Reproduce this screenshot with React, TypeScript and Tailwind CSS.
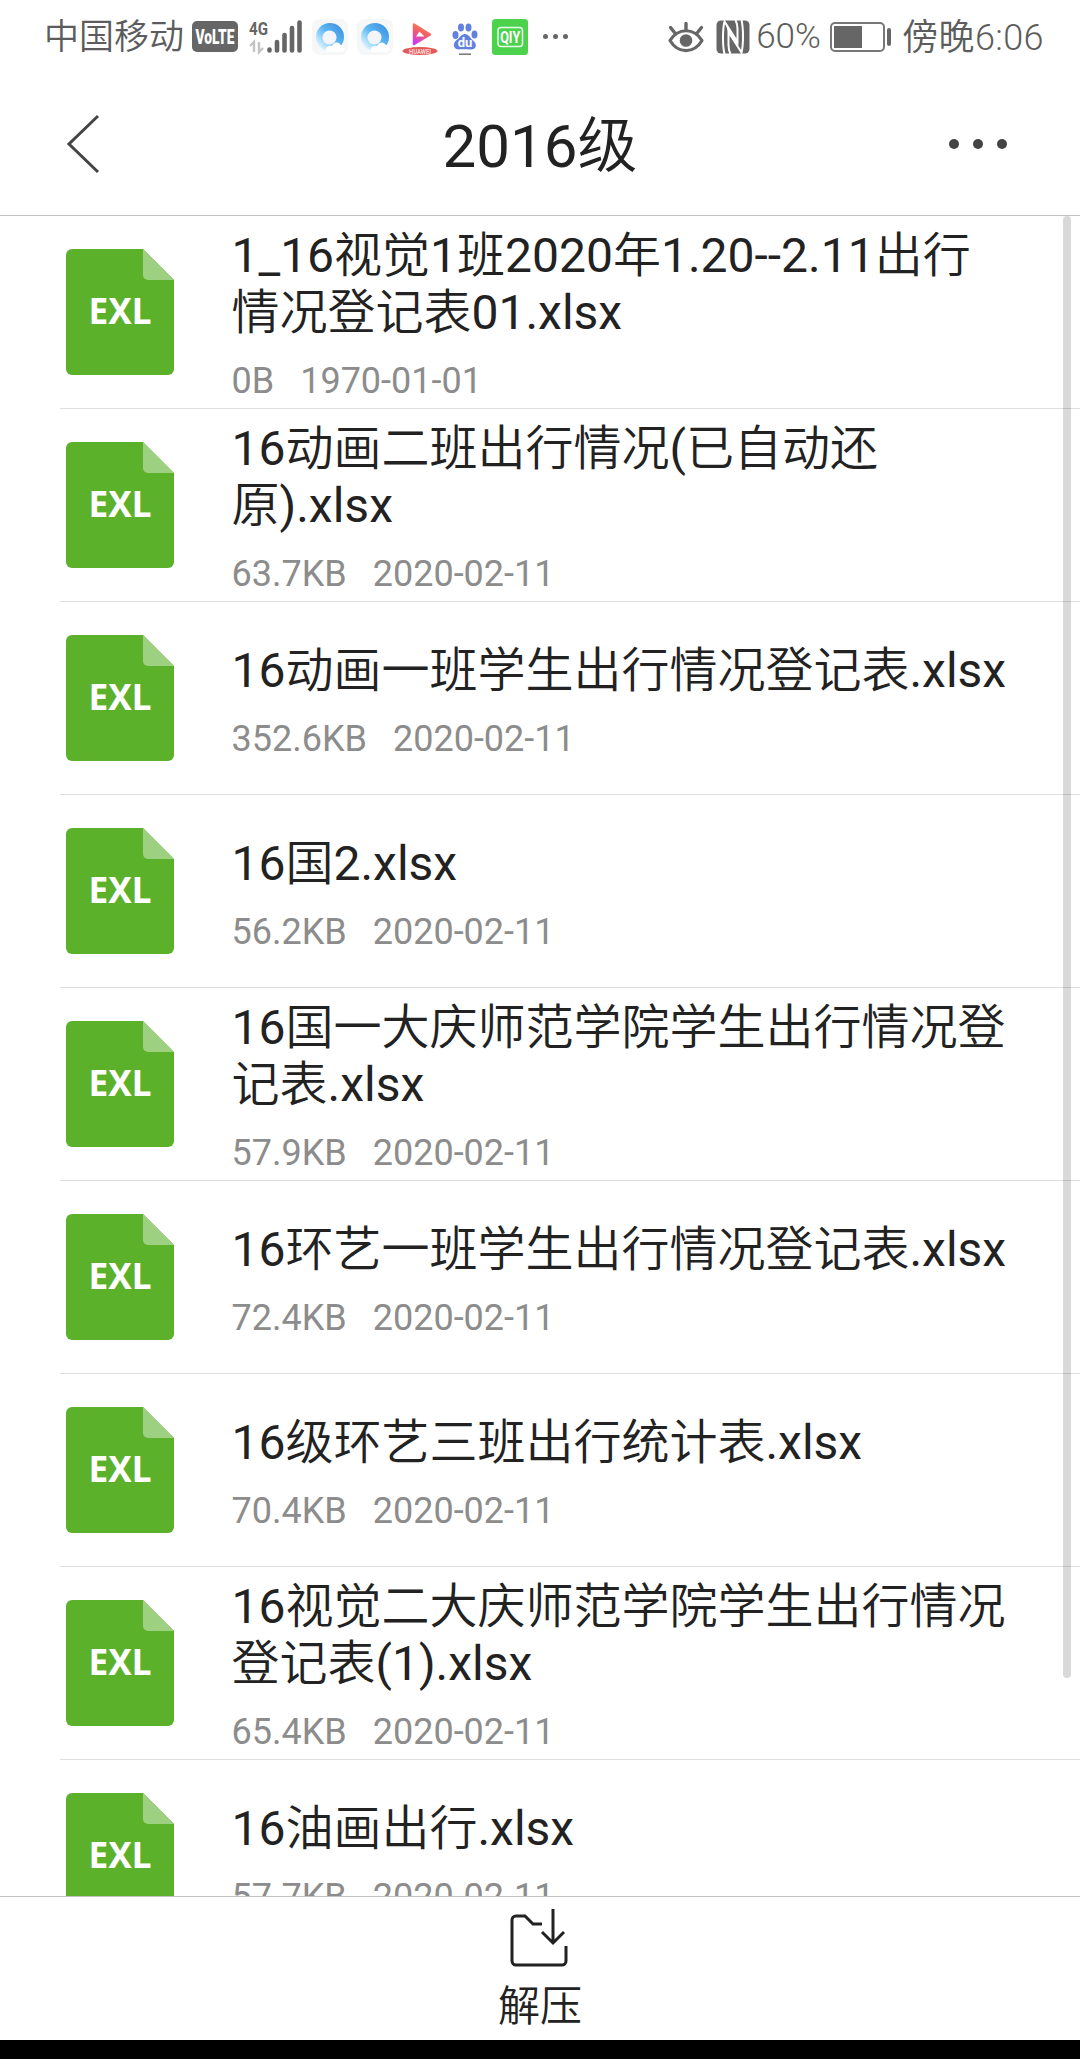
type FileEntry = {
  name: string[];
  size: string;
  date: string;
};

const FILES: FileEntry[] = [
  { name: ["1_16视觉1班2020年1.20--2.11出行", "情况登记表01.xlsx"], size: "0B", date: "1970-01-01" },
  { name: ["16动画二班出行情况(已自动还", "原).xlsx"], size: "63.7KB", date: "2020-02-11" },
  { name: ["16动画一班学生出行情况登记表.xlsx"], size: "352.6KB", date: "2020-02-11" },
  { name: ["16国2.xlsx"], size: "56.2KB", date: "2020-02-11" },
  { name: ["16国一大庆师范学院学生出行情况登", "记表.xlsx"], size: "57.9KB", date: "2020-02-11" },
  { name: ["16环艺一班学生出行情况登记表.xlsx"], size: "72.4KB", date: "2020-02-11" },
  { name: ["16级环艺三班出行统计表.xlsx"], size: "70.4KB", date: "2020-02-11" },
  { name: ["16视觉二大庆师范学院学生出行情况", "登记表(1).xlsx"], size: "65.4KB", date: "2020-02-11" },
  { name: ["16油画出行.xlsx"], size: "57.7KB", date: "2020-02-11" },
];

function SignalIcon() {
  return (
    <svg viewBox="0 0 56 36" className="ml-[11px] h-9 w-14 shrink-0 overflow-visible" aria-hidden="true">
      <text x="0" y="16" fontSize="19" fontWeight="700" textLength="19" lengthAdjust="spacingAndGlyphs" fill="#666" fontFamily="Roboto">4G</text>
      <g stroke="#c4c4c4" strokeWidth="2.400" fill="none">
        <path d="M1 27l4-4v10M10 23v10l4-4" />
      </g>
      <g stroke="#666" strokeWidth="4.600" strokeLinecap="round">
        <path d="M20.500 30.500v1M28 23v8.500M35.500 16v15.500M43 9v22.500M50.500 3.500v28" />
      </g>
    </svg>
  );
}

function BrowserIcon() {
  return (
    <svg viewBox="0 0 36 36" className="h-9 w-9 shrink-0" aria-hidden="true">
      <defs>
        <linearGradient id="ring" x1="1" y1="0.200" x2="0.200" y2="1">
          <stop offset="0" stopColor="#3f93e0" />
          <stop offset="0.450" stopColor="#5ab5f2" />
          <stop offset="0.750" stopColor="#a5dcfa" />
          <stop offset="1" stopColor="#eef9fe" />
        </linearGradient>
      </defs>
      <rect width="36" height="36" rx="8" fill="#f6f7f8" />
      <circle cx="18" cy="18" r="14" fill="url(#ring)" />
      <circle cx="17.500" cy="18.500" r="7" fill="#f3f5fa" />
      <path d="M14 33c-2-4 2-7 6-6 2-4 6-5 9-1 5 1 5 7 0 7z" fill="#fff" />
    </svg>
  );
}

function VideoIcon() {
  return (
    <svg viewBox="0 0 36 36" className="h-9 w-9 shrink-0 overflow-visible" aria-hidden="true">
      <defs>
        <linearGradient id="play" x1="0.600" y1="0" x2="0.200" y2="1">
          <stop offset="0" stopColor="#f8834a" />
          <stop offset="0.450" stopColor="#ef5c6c" />
          <stop offset="1" stopColor="#c93cf5" />
        </linearGradient>
      </defs>
      <path d="M12 5.500l16 10L12 25z" fill="url(#play)" stroke="url(#play)" strokeWidth="2.500" strokeLinejoin="round" />
      <path d="M14 17.500l3.500-5 5 5z" fill="#fff" />
      <ellipse cx="18" cy="32" rx="17.500" ry="4" fill="#e4585a" />
      <text x="18" y="34.500" fontSize="7" fontWeight="700" textAnchor="middle" textLength="22" lengthAdjust="spacingAndGlyphs" fill="#fbd9d9" fontFamily="Roboto">HUAWEI</text>
    </svg>
  );
}

function PawIcon() {
  return (
    <svg viewBox="0 0 36 36" className="h-9 w-9 shrink-0 overflow-visible" aria-hidden="true">
      <g fill="#6281de">
        <ellipse cx="8.500" cy="16" rx="3" ry="4" />
        <ellipse cx="14" cy="8.500" rx="3" ry="4" />
        <ellipse cx="21.500" cy="8.500" rx="3" ry="4" />
        <ellipse cx="27.500" cy="15.500" rx="3" ry="4" />
        <path d="M18 15c4 0 5 4 8 6.500 5 4 3 9-2 9-3 0-9-.500-12 0-5 0-7-5-3-9 4-2.500 5-6.500 9-6.500z" />
      </g>
      <text x="18" y="28" fontSize="13" fontWeight="700" textAnchor="middle" fill="#fff" fontFamily="Roboto">du</text>
      <path d="M12 35.200h12" stroke="#777" strokeWidth="1.500" />
    </svg>
  );
}

function QiyIcon() {
  return (
    <svg viewBox="0 0 36 36" className="h-9 w-9 shrink-0" aria-hidden="true">
      <rect width="36" height="36" rx="3.500" fill="#4cd24c" />
      <rect x="6" y="8.500" width="24.500" height="19" rx="3" fill="none" stroke="#e9fbe9" strokeWidth="1.500" />
      <text x="18.200" y="24" fontSize="17" fontWeight="700" textAnchor="middle" textLength="20" lengthAdjust="spacingAndGlyphs" fill="#fff" fontFamily="Roboto">QIY</text>
    </svg>
  );
}

function EyeIcon() {
  return (
    <svg viewBox="0 0 36 32" className="h-8 w-9 shrink-0" fill="none" stroke="#666" strokeLinecap="round" aria-hidden="true">
      <path d="M2 19.500C10 6.500 26 6.500 34 19.500 26 33 10 33 2 19.500z" strokeWidth="3.200" strokeLinejoin="round" />
      <path d="M18 2.500v6M2.500 6.500l4 5M33.500 6.500l-4 5" strokeWidth="3.400" />
      <circle cx="18" cy="19.500" r="6.300" fill="#666" stroke="none" />
    </svg>
  );
}

function NfcIcon() {
  return (
    <svg viewBox="0 0 34 34" className="ml-[12px] h-[34px] w-[34px] shrink-0" fill="none" aria-hidden="true">
      <rect x="0.500" y="0.500" width="33" height="33" rx="4.500" fill="#666" />
      <path d="M8.500 34C6.500 26 6.500 9 8.500 1.500L21.500 22V9c0-4-.500-6-2-9" stroke="#fff" strokeWidth="2" />
      <path d="M25.500 0c2 8 2 25 0 32.500L12.500 12v13c0 4 .500 6 2 9" stroke="#fff" strokeWidth="2" />
      <path d="M8.500 1l13 20v6l-9-14z" fill="#fff" />
    </svg>
  );
}

function StatusBar() {
  return (
    <div className="flex h-[72px] items-center pt-[1px] pl-[44px] pr-[36px] text-4xl font-light text-[#5c5c5c]">
      <span className="w-[141px] shrink-0 pt-[3px] text-[35px] leading-[44px] whitespace-nowrap">中国移动</span>
      <span className="ml-[7px] flex h-[31px] w-[46px] shrink-0 items-center justify-center rounded-[5px] bg-[#666]">
        <svg viewBox="0 0 46 31" className="h-[31px] w-[46px] overflow-visible" aria-hidden="true">
          <text x="3.500" y="23" fontSize="20" fontWeight="900" textLength="39" lengthAdjust="spacingAndGlyphs" fill="#fff" fontFamily="Roboto">VoLTE</text>
        </svg>
      </span>
      <SignalIcon />
      <div className="ml-[7px] flex gap-[9px]">
        <BrowserIcon />
        <BrowserIcon />
        <VideoIcon />
        <PawIcon />
        <QiyIcon />
      </div>
      <div className="ml-[15px] flex gap-[5px]">
        <i className="h-[5px] w-[5px] rounded-full bg-[#666]" />
        <i className="h-[5px] w-[5px] rounded-full bg-[#666]" />
        <i className="h-[5px] w-[5px] rounded-full bg-[#666]" />
      </div>
      <div className="ml-auto flex items-center">
        <EyeIcon />
        <NfcIcon />
        <span className="ml-[6px] w-[66px] pt-[2px] text-[35px] whitespace-nowrap">60%</span>
        <svg viewBox="0 0 62 30" className="ml-[8px] h-[30px] w-[62px] shrink-0" aria-hidden="true">
          <rect x="1" y="1" width="53" height="28" rx="4" fill="none" stroke="#777" strokeWidth="2" />
          <rect x="4" y="4" width="28" height="22" fill="#666" />
          <rect x="57" y="6" width="4" height="18" rx="2" fill="#666" />
        </svg>
        <span className="ml-[10px] pt-[2px] tracking-[0.4px] whitespace-nowrap">傍晚6:06</span>
      </div>
    </div>
  );
}

function FileIcon() {
  return (
    <svg viewBox="0 0 108 126" className="h-[126px] w-[108px] shrink-0" aria-hidden="true">
      <path d="M6 0h71l31 31v89a6 6 0 0 1-6 6H6a6 6 0 0 1-6-6V6a6 6 0 0 1 6-6z" fill="#5cb12b" />
      <path d="M77 0l31 31H82a5 5 0 0 1-5-5z" fill="#9dd080" />
      <text x="54" y="75" fontSize="36" fontWeight="700" textAnchor="middle" textLength="63" lengthAdjust="spacingAndGlyphs" fill="#fff" fontFamily="Noto Sans">EXL</text>
    </svg>
  );
}

function FileRow({ file }: { file: FileEntry }) {
  return (
    <li className="flex h-[193px] shrink-0 pl-[60px]">
      <div className="flex flex-1 items-center border-b border-[#dedede] pl-[6px]">
        <FileIcon />
        <div className="ml-[57.5px] pt-[5px] text-[#222]">
          <h2 className="text-5xl leading-[57px] whitespace-nowrap">
            {file.name.map((line) => (
              <span key={line} className="block h-[57px]">{line}</span>
            ))}
          </h2>
          <p className="mt-[19px] flex h-[42px] gap-[26px] text-4xl leading-[42px] text-[#8c8c8c]">
            <span>{file.size}</span>
            <span>{file.date}</span>
          </p>
        </div>
      </div>
    </li>
  );
}

export default function App() {
  return (
    <div className="flex h-[2059px] w-[1080px] flex-col overflow-hidden bg-white font-[Roboto,'Noto_Sans_CJK_SC_DemiLight','Noto_Sans_CJK_SC',sans-serif]">
      <StatusBar />

      <header className="flex h-[144px] items-center justify-between border-b border-[#c2c2c2] px-[66px] text-[#222]">
        <button className="w-[100px]" aria-label="返回">
          <svg viewBox="0 0 34 60" className="h-[60px] w-[34px]" fill="none" stroke="#444" strokeWidth="3" aria-hidden="true">
            <path d="M32 2L3 30l29 28" />
          </svg>
        </button>
        <h1 className="pt-[6px] text-6xl leading-[72px]">2016级</h1>
        <button className="flex w-[100px] justify-end gap-[14px] pr-[7px]" aria-label="更多">
          <i className="h-[10px] w-[10px] rounded-full bg-[#444]" />
          <i className="h-[10px] w-[10px] rounded-full bg-[#444]" />
          <i className="h-[10px] w-[10px] rounded-full bg-[#444]" />
        </button>
      </header>

      <main className="relative h-[1680px] overflow-hidden">
        <ul className="flex flex-col">
          {FILES.map((file) => (
            <FileRow key={file.name[0]} file={file} />
          ))}
        </ul>
        <div className="absolute top-0 right-[9px] h-[1462px] w-2 rounded-full bg-black/15" />
      </main>

      <footer className="flex h-[144px] flex-col items-center border-t border-[#c2c2c2] text-[#222]">
        <svg viewBox="0 0 58 60" className="mt-[10px] mr-[2px] h-[60px] w-[58px]" fill="none" stroke="#222" strokeWidth="3" aria-hidden="true">
          <path d="M32 17h-9l-8-8H6a4 4 0 0 0-4 4v41a4 4 0 0 0 4 4h46a4 4 0 0 0 4-4V39" />
          <path d="M43 2v34M32 25l11 11 11-11" />
        </svg>
        <span className="mt-[10px] text-[42px] leading-[60px]">解压</span>
      </footer>
      <div className="h-[19px] bg-black" />
    </div>
  );
}
